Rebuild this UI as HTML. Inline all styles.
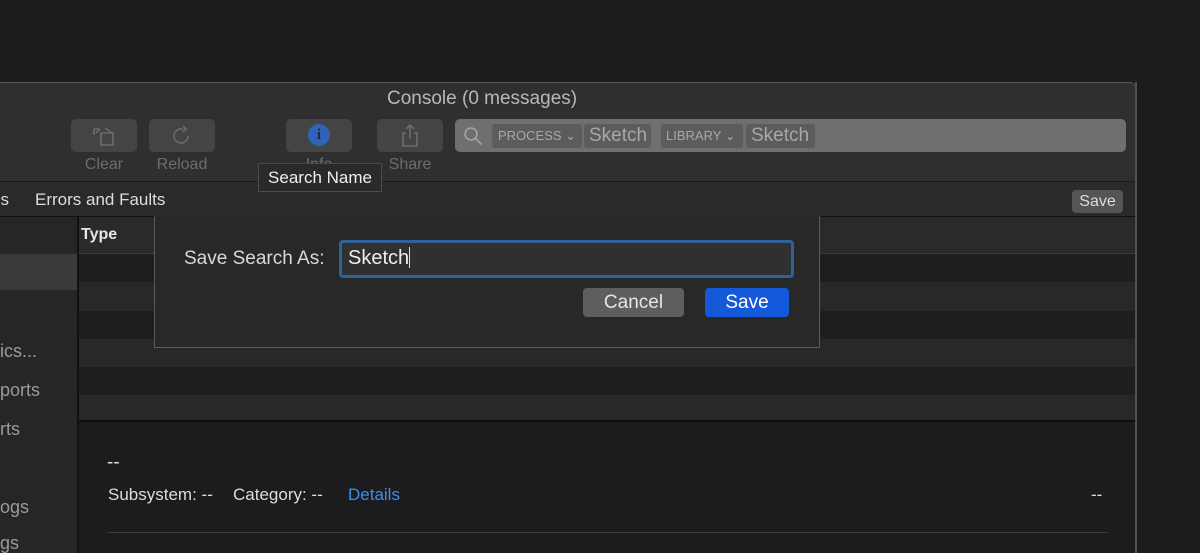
<!DOCTYPE html>
<html style="width:1200px;height:553px;overflow:hidden"><head><meta charset="utf-8"><style>
*{box-sizing:border-box;margin:0;padding:0}
body{width:1200px;height:553px;overflow:hidden;background:#1c1c1e;font-family:"Liberation Sans",sans-serif;position:relative;color:#ddd}
.abs{position:absolute}
.win{left:-10px;top:82px;width:1147px;height:471px;background:#2c2c2e;border:1px solid #5a5a5c;border-bottom:none;border-radius:8px 8px 0 0;overflow:hidden}
.tb{position:absolute;left:0;top:0;width:100%;height:99px;background:#2f2f32;border-bottom:1px solid #1a1a1a}
.title{position:absolute;left:396px;top:5px;font-size:19px;color:#b8b8b8;white-space:nowrap}
.btn{position:absolute;top:36px;width:66px;height:33px;background:#444446;border-radius:5px}
.lbl{position:absolute;top:73px;font-size:16px;color:#6c6c6e;width:80px;text-align:center}
.search{position:absolute;left:464px;top:36px;width:671px;height:33px;background:#6f6f71;border-radius:5px}
.tok{position:absolute;top:5px;height:24px;background:#5c5c5e;border-radius:3px;color:#a8a8aa;white-space:nowrap}
.fb{position:absolute;left:0;top:100px;width:100%;height:34px;background:#2a2a2c;border-bottom:1px solid #111}
</style></head><body>
<div class="abs win">
 <div class="tb">
  <div class="title">Console (0 messages)</div>
  <div class="btn" style="left:80px"></div>
  <svg class="abs" style="left:100px;top:42px" width="26" height="22" viewBox="0 0 26 22" fill="none" stroke="#6c6c6e" stroke-width="1.6"><path d="M3 4h5M3 4v6M5 8l4-4M10 8h12v12H10zM14 3l6 4"/></svg>
  <div class="lbl" style="left:73px">Clear</div>
  <div class="btn" style="left:158px"></div>
  <svg class="abs" style="left:180px;top:42px" width="22" height="22" viewBox="0 0 22 22" fill="none" stroke="#6c6c6e" stroke-width="1.6"><path d="M17 11a7 7 0 1 1-5-6.7M12 1l3 3-3 3"/></svg>
  <div class="lbl" style="left:151px">Reload</div>
  <div class="btn" style="left:295px"></div>
  <div class="abs" style="left:317px;top:41px;width:22px;height:22px;border-radius:50%;background:#2f63b8;color:#1c2a44;font:bold 15px 'Liberation Serif',serif;text-align:center;line-height:22px">i</div>
  <div class="lbl" style="left:288px">Info</div>
  <div class="btn" style="left:386px"></div>
  <svg class="abs" style="left:409px;top:40px" width="20" height="26" viewBox="0 0 20 26" fill="none" stroke="#6c6c6e" stroke-width="1.6"><path d="M10 2v14M6 6l4-4 4 4M6 10H3v13h14V10h-3"/></svg>
  <div class="lbl" style="left:379px">Share</div>
  <div class="search">
   <svg class="abs" style="left:8px;top:7px" width="20" height="20" viewBox="0 0 20 20" fill="none" stroke="#a4a4a6" stroke-width="1.6"><circle cx="8" cy="8" r="6"/><path d="M12.5 12.5l6 6"/></svg>
   <div class="tok" style="left:37px;width:90px;font-size:13px;line-height:24px;padding-left:6px">PROCESS ⌄</div>
   <div class="tok" style="left:129px;width:67px;font-size:19px;line-height:24px;padding-left:5px">Sketch</div>
   <div class="tok" style="left:206px;width:82px;font-size:13px;line-height:24px;padding-left:5px">LIBRARY ⌄</div>
   <div class="tok" style="left:291px;width:69px;font-size:19px;line-height:24px;padding-left:5px">Sketch</div>
  </div>
 </div>
 <div class="fb">
  <div class="abs" style="left:0;top:7px;font-size:17px;color:#ddd">es</div>
  <div class="abs" style="left:44px;top:7px;font-size:17px;color:#ddd">Errors and Faults</div>
  <div class="abs" style="left:1081px;top:7px;width:51px;height:23px;background:#555557;border-radius:4px;font-size:16px;text-align:center;line-height:23px;color:#ddd">Save</div>
 </div>
</div>
<!-- sidebar -->
<div class="abs" style="left:0;top:217px;width:77px;height:336px;background:#262628"></div>
<div class="abs" style="left:0;top:254px;width:77px;height:36px;background:#3a3a3c"></div>
<div class="abs" style="left:77px;top:217px;width:2px;height:336px;background:#111"></div>
<div class="abs" style="left:0;top:341px;font-size:18px;color:#9a9a9c">ics...</div>
<div class="abs" style="left:0;top:380px;font-size:18px;color:#9a9a9c">ports</div>
<div class="abs" style="left:0;top:419px;font-size:18px;color:#9a9a9c">rts</div>
<div class="abs" style="left:0;top:497px;font-size:18px;color:#9a9a9c">ogs</div>
<div class="abs" style="left:0;top:533px;font-size:18px;color:#9a9a9c;height:20px;overflow:hidden">gs</div>
<!-- table -->
<div class="abs" style="left:79px;top:217px;width:1056px;height:37px;background:#2a2a2c;border-bottom:1px solid #3c3c3e"></div>
<div class="abs" style="left:81px;top:226px;font-size:16px;font-weight:bold;color:#e6e6e6">Type</div>
<div class="abs" style="left:79px;top:254px;width:1056px;height:28px;background:#1e1e20"></div>
<div class="abs" style="left:79px;top:282px;width:1056px;height:29px;background:#28282a"></div>
<div class="abs" style="left:79px;top:311px;width:1056px;height:28px;background:#1e1e20"></div>
<div class="abs" style="left:79px;top:339px;width:1056px;height:28px;background:#28282a"></div>
<div class="abs" style="left:79px;top:367px;width:1056px;height:28px;background:#1e1e20"></div>
<div class="abs" style="left:79px;top:395px;width:1056px;height:25px;background:#28282a"></div>
<div class="abs" style="left:79px;top:420px;width:1056px;height:2px;background:#0e0e0e"></div>
<div class="abs" style="left:79px;top:422px;width:1056px;height:131px;background:#1c1c1e"></div>
<div class="abs" style="left:1135px;top:82px;width:2px;height:471px;background:#505052"></div>
<div class="abs" style="left:107px;top:452px;font-size:19px;color:#ddd">--</div>
<div class="abs" style="left:108px;top:485px;font-size:17px;color:#ddd;white-space:nowrap">Subsystem: --</div>
<div class="abs" style="left:233px;top:485px;font-size:17px;color:#ddd;white-space:nowrap">Category: --</div>
<div class="abs" style="left:348px;top:485px;font-size:17px;color:#3d8ef0">Details</div>
<div class="abs" style="left:1091px;top:485px;font-size:17px;color:#ddd">--</div>
<div class="abs" style="left:107px;top:532px;width:1001px;height:1px;background:#39393b"></div>
<!-- tooltip -->
<div class="abs" style="left:258px;top:163px;width:124px;height:29px;background:#2a2a2c;border:1px solid #4a4a4c;font-size:17px;color:#eee;text-align:center;line-height:27px;white-space:nowrap">Search Name</div>
<!-- dialog -->
<div class="abs" style="left:154px;top:216px;width:666px;height:132px;background:#282829;border:1px solid #5a5a5c;border-top:none"></div>
<div class="abs" style="left:184px;top:248px;font-size:19px;color:#d8d8d8;white-space:nowrap">Save Search As:</div>
<div class="abs" style="left:339px;top:240px;width:455px;height:38px;border:3px solid #2d6399;border-radius:4px;background:#303032;font-size:20px;color:#eee;padding:4px 0 0 6px">Sketch<span style="display:inline-block;width:1px;height:21px;background:#ddd;vertical-align:-4px"></span></div>
<div class="abs" style="left:583px;top:288px;width:101px;height:29px;background:#5e5e60;border-radius:4px;font-size:19px;color:#e6e6e6;text-align:center;line-height:29px">Cancel</div>
<div class="abs" style="left:705px;top:288px;width:84px;height:29px;background:#1459d9;border-radius:4px;font-size:19px;color:#fff;text-align:center;line-height:29px">Save</div>
</body></html>
